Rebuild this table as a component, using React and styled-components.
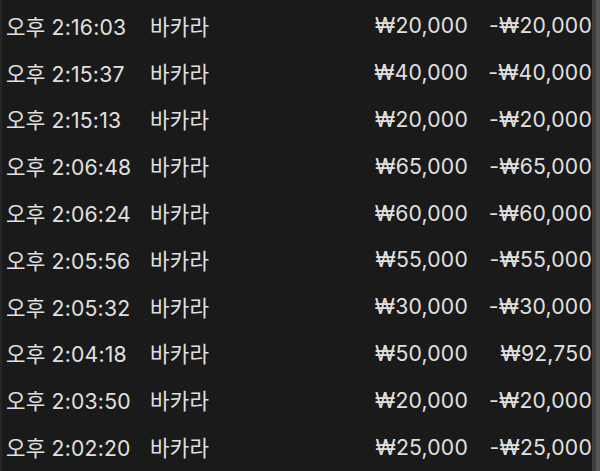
import React from 'react';
import styled, { createGlobalStyle } from 'styled-components';

const GlobalStyle = createGlobalStyle`
  html, body {
    margin: 0;
    padding: 0;
    background: #1a1a1a;
  }
`;

const Screen = styled.div`
  display: flex;
  width: 600px;
  height: 471px;
  overflow: hidden;
  background: #1a1a1a;
  border-left: 2px solid #262626;
  box-sizing: border-box;
`;

const List = styled.div`
  flex: 1;
  padding: 2px 0 0 4px;
  display: flex;
  flex-direction: column;
`;

const Row = styled.div`
  display: grid;
  grid-template-columns: 144px 1fr 120px 124px;
  align-items: center;
  height: 46.8px;
  color: #e0e0e0;
  font-family: Inter, "Noto Sans CJK KR", sans-serif;
  font-size: 21.2px;
  font-weight: 400;
  letter-spacing: 0.2px;
`;

const Cell = styled.span`
  white-space: nowrap;
  text-align: ${p => (p.right ? 'right' : 'left')};
`;

const Scrollbar = styled.div`
  width: 8px;
  flex: none;
  display: flex;
`;

const Track = styled.div`
  flex: 1;
  background: ${p => p.tone};
`;

const rows = [
  ['오후 2:16:03', '₩20,000', '-₩20,000'],
  ['오후 2:15:37', '₩40,000', '-₩40,000'],
  ['오후 2:15:13', '₩20,000', '-₩20,000'],
  ['오후 2:06:48', '₩65,000', '-₩65,000'],
  ['오후 2:06:24', '₩60,000', '-₩60,000'],
  ['오후 2:05:56', '₩55,000', '-₩55,000'],
  ['오후 2:05:32', '₩30,000', '-₩30,000'],
  ['오후 2:04:18', '₩50,000', '₩92,750'],
  ['오후 2:03:50', '₩20,000', '-₩20,000'],
  ['오후 2:02:20', '₩25,000', '-₩25,000']
];

export default function App() {
  return (
    <>
      <GlobalStyle />
      <Screen>
        <List>
          {rows.map(([time, bet, result]) => (
            <Row key={time}>
              <Cell>{time}</Cell>
              <Cell>바카라</Cell>
              <Cell right>{bet}</Cell>
              <Cell right>{result}</Cell>
            </Row>
          ))}
        </List>
        <Scrollbar>
          <Track tone="#404040" />
          <Track tone="#575757" />
        </Scrollbar>
      </Screen>
    </>
  );
}
